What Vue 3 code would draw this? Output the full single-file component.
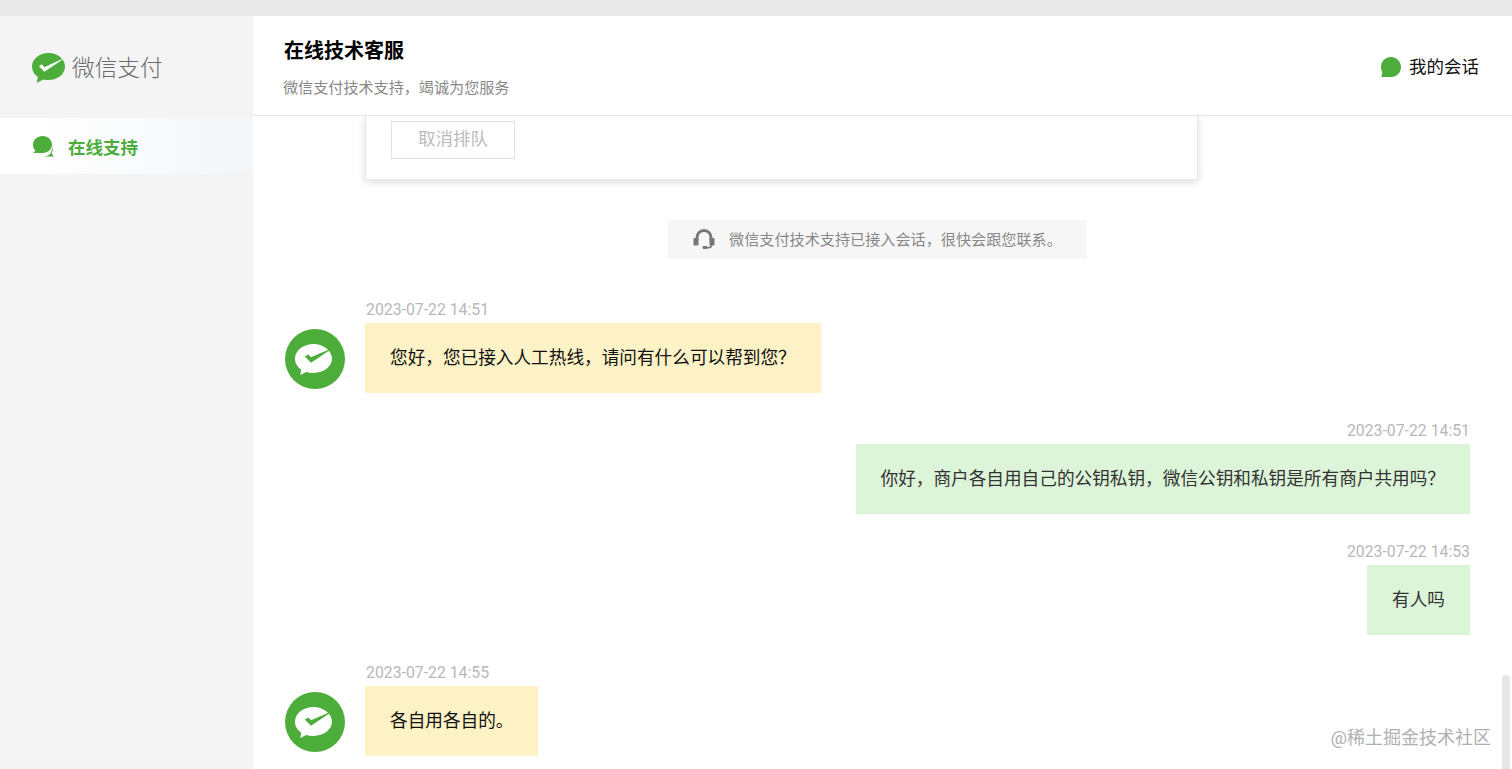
<template>
  <div class="page">
    <div class="top-strip"></div>
    <div class="shell">
      <aside class="sidebar">
        <div class="logo">
          <svg class="logo-icon" viewBox="0 0 33 30">
            <path d="M16.500 0C7.400 0 0 6 0 13.500c0 4.200 2.300 8 5.900 10.500L4.600 30l6.700-3.500c1.700.4 3.400.6 5.200.6 9.100 0 16.500-6 16.500-13.600S25.600 0 16.500 0z" fill="#4cad3b"/>
            <path d="M7 13.300 9.800 11.300 12.500 14.200 30 6 30.600 6.600 12.400 18.800z" fill="#fff"/>
          </svg>
          <span class="logo-text">微信支付</span>
        </div>
        <div class="nav-item">
          <svg class="nav-icon" viewBox="0 0 21 21">
            <path d="M9.700 0C4.400 0 0 3.900 0 8.700c0 2.300.9 4.300 2.500 5.900L.2 17h9.500c5.200 0 9.300-3.700 9.300-8.400S14.900 0 9.700 0z" fill="#4cad3b"/>
            <path d="M19.300 10.500c.9 2.500.4 5-.7 6.800l2.200 3.300H9.800c3.600-.3 6.800-1.300 8-3.600 1-1.900 1.300-4.300 1.500-6.500z" fill="#4cad3b"/>
          </svg>
          <span>在线支持</span>
        </div>
      </aside>

      <main class="main">
        <header class="header">
          <div>
            <h1 class="title">在线技术客服</h1>
            <p class="subtitle">微信支付技术支持，竭诚为您服务</p>
          </div>
          <div class="my-chat">
            <svg class="chat-icon" viewBox="0 0 20 20">
              <path d="M10 0C4.500 0 0 4.300 0 9.800c0 2 .4 3.600 1.400 5.200L.3 20h9.900C15.700 20 20 15.500 20 10S15.500 0 10 0z" fill="#4cad3b"/>
            </svg>
            <span class="my-chat-label">我的会话</span>
          </div>
        </header>

        <div class="content">
          <div class="queue-card">
            <button class="cancel-btn">取消排队</button>
          </div>

          <div class="notice">
            <svg class="headset" viewBox="0 0 22 20">
              <path d="M4 11V9C4 4.500 7 1.500 11 1.500S18 4.500 18 9v2" fill="none" stroke="#777" stroke-width="3"/>
              <rect x="0.500" y="9" width="5" height="7.500" rx="1.200" fill="#777"/>
              <rect x="16.500" y="9" width="5" height="7.500" rx="1.200" fill="#777"/>
              <path d="M18.500 16c0 1.800-1.500 2.800-3.500 2.800h-2" fill="none" stroke="#777" stroke-width="1.600"/>
              <rect x="9.500" y="17" width="5" height="3" rx="1.200" fill="#777"/>
            </svg>
            <span>微信支付技术支持已接入会话，很快会跟您联系。</span>
          </div>

          <div
            v-for="msg in messages"
            :key="msg.time + msg.text"
            class="message"
            :class="msg.mine ? 'mine' : 'theirs'"
          >
            <svg v-if="!msg.mine" class="avatar" viewBox="0 0 60 60">
              <circle cx="30" cy="30" r="30" fill="#4cad3b"/>
              <path d="M28.500 15C18.300 15 10 21.600 10 29.800c0 4.300 2.400 8.200 6.200 10.900l-.9 5.300 5.900-3c2.300.6 4.700.9 7.300.9 10.200 0 18.500-6.400 18.500-14.100S38.700 15 28.500 15z" fill="#fff"/>
              <path d="M19.800 27.500 23.300 25.500 26 28.300 44 20.500 44.600 21.300 26 33.800z" fill="#4cad3b"/>
            </svg>
            <div class="message-body">
              <div class="time">{{ msg.time }}</div>
              <div class="bubble">{{ msg.text }}</div>
            </div>
          </div>

          <div class="scroll-thumb"></div>
        </div>
      </main>
    </div>
    <div class="watermark">@稀土掘金技术社区</div>
  </div>
</template>

<script setup>
const messages = [
  { time: '2023-07-22 14:51', text: '您好，您已接入人工热线，请问有什么可以帮到您？', mine: false },
  { time: '2023-07-22 14:51', text: '你好，商户各自用自己的公钥私钥，微信公钥和私钥是所有商户共用吗？', mine: true },
  { time: '2023-07-22 14:53', text: '有人吗', mine: true },
  { time: '2023-07-22 14:55', text: '各自用各自的。', mine: false }
]
</script>

<style>
html, body {
  margin: 0;
  overflow: hidden;
  background: #fff;
}
</style>

<style scoped>
.page {
  position: relative;
  display: flex;
  flex-direction: column;
  height: 769px;
  overflow: hidden;
  font-family: Roboto, "Noto Sans CJK SC", sans-serif;
  color: #111;
}

.top-strip {
  flex: none;
  height: 16px;
  background: #e9e9e9;
}

.shell {
  flex: 1;
  display: flex;
  min-height: 0;
}

/* sidebar */
.sidebar {
  flex: none;
  width: 253px;
  background: #f4f4f5;
}

.logo {
  display: flex;
  align-items: center;
  height: 102px;
  padding-left: 32px;
  box-sizing: border-box;
}

.logo-icon {
  width: 33px;
  height: 30px;
  margin: 2px 7px 0 0;
}

.logo-text {
  font-size: 22.700px;
  font-weight: 300;
  color: #6a6a6a;
  padding-bottom: 2px;
}

.nav-item {
  display: flex;
  align-items: center;
  height: 56px;
  padding-left: 33px;
  box-sizing: border-box;
  font-size: 17.500px;
  font-weight: 700;
  color: #4cad3b;
  background: linear-gradient(90deg, #fff 15%, #f4f6f8 90%);
}

.nav-icon {
  width: 21px;
  height: 21px;
  margin-right: 14px;
}

/* main column */
.main {
  flex: 1;
  display: flex;
  flex-direction: column;
  min-width: 0;
  background: #fff;
}

.header {
  flex: none;
  display: flex;
  align-items: center;
  justify-content: space-between;
  height: 100px;
  padding: 5px 33px 0 30px;
  box-sizing: border-box;
  border-bottom: 1px solid #e4e4e4;
}

.title {
  margin: 0 0 12px 1px;
  font-size: 20px;
  line-height: 28px;
  font-weight: 700;
  color: #000;
}

.subtitle {
  margin: 0;
  font-size: 15.100px;
  line-height: 22px;
  color: #888;
}

.my-chat {
  display: flex;
  align-items: center;
  gap: 8px;
  margin-bottom: 3px;
  font-size: 17.500px;
  color: #111;
}

.my-chat-label {
  padding-bottom: 3px;
}

.chat-icon {
  width: 20px;
  height: 20px;
}

/* conversation */
.content {
  position: relative;
  flex: 1;
  min-height: 0;
  overflow: hidden;
  padding: 0 42px 0 32px;
}

.queue-card {
  width: 833px;
  height: 64px;
  margin-left: 80px;
  padding: 5px 0 0 25px;
  box-sizing: border-box;
  border: 1px solid #e8e8e8;
  border-top: 0;
  box-shadow: 0 2px 8px rgba(0, 0, 0, 0.14);
}

.cancel-btn {
  display: block;
  width: 124px;
  height: 38px;
  padding: 0 0 6px;
  border: 1px solid #e2e2e2;
  background: #fff;
  font: inherit;
  font-size: 17.500px;
  color: #bbb;
}

.notice {
  display: flex;
  align-items: center;
  width: 419px;
  height: 39px;
  margin: 40px auto;
  padding: 0 0 1px 25px;
  box-sizing: border-box;
  background: #f6f6f6;
  font-size: 15.130px;
  color: #888;
}

.notice span {
  padding-bottom: 3px;
}

.headset {
  width: 22px;
  height: 20px;
  margin-right: 14px;
}

.message {
  display: flex;
  gap: 20px;
  margin-bottom: 27px;
}

.message.mine {
  justify-content: flex-end;
}

.avatar {
  flex: none;
  width: 60px;
  height: 60px;
  margin-top: 30px;
}

.message-body {
  display: flex;
  flex-direction: column;
}

.mine .message-body {
  align-items: flex-end;
}

.time {
  margin-bottom: 3px;
  padding: 1px 0 0 1px;
  font-size: 15.800px;
  line-height: 20px;
  color: #b8b8b8;
}

.bubble {
  height: 70px;
  padding: 0 25px;
  box-sizing: border-box;
  font-size: 17.650px;
  line-height: 70px;
  white-space: nowrap;
}

.theirs .bubble {
  background: #fdf2c6;
  color: #111;
}

.mine .bubble {
  background: #dcf4d8;
  color: #333;
}

.scroll-thumb {
  position: absolute;
  right: 2px;
  bottom: 0;
  width: 8px;
  height: 94px;
  border-radius: 4px 4px 0 0;
  background: #e6e6e6;
}

.watermark {
  position: absolute;
  right: 21px;
  top: 726px;
  font-size: 18px;
  line-height: 24px;
  color: #b0b0b0;
}
</style>
